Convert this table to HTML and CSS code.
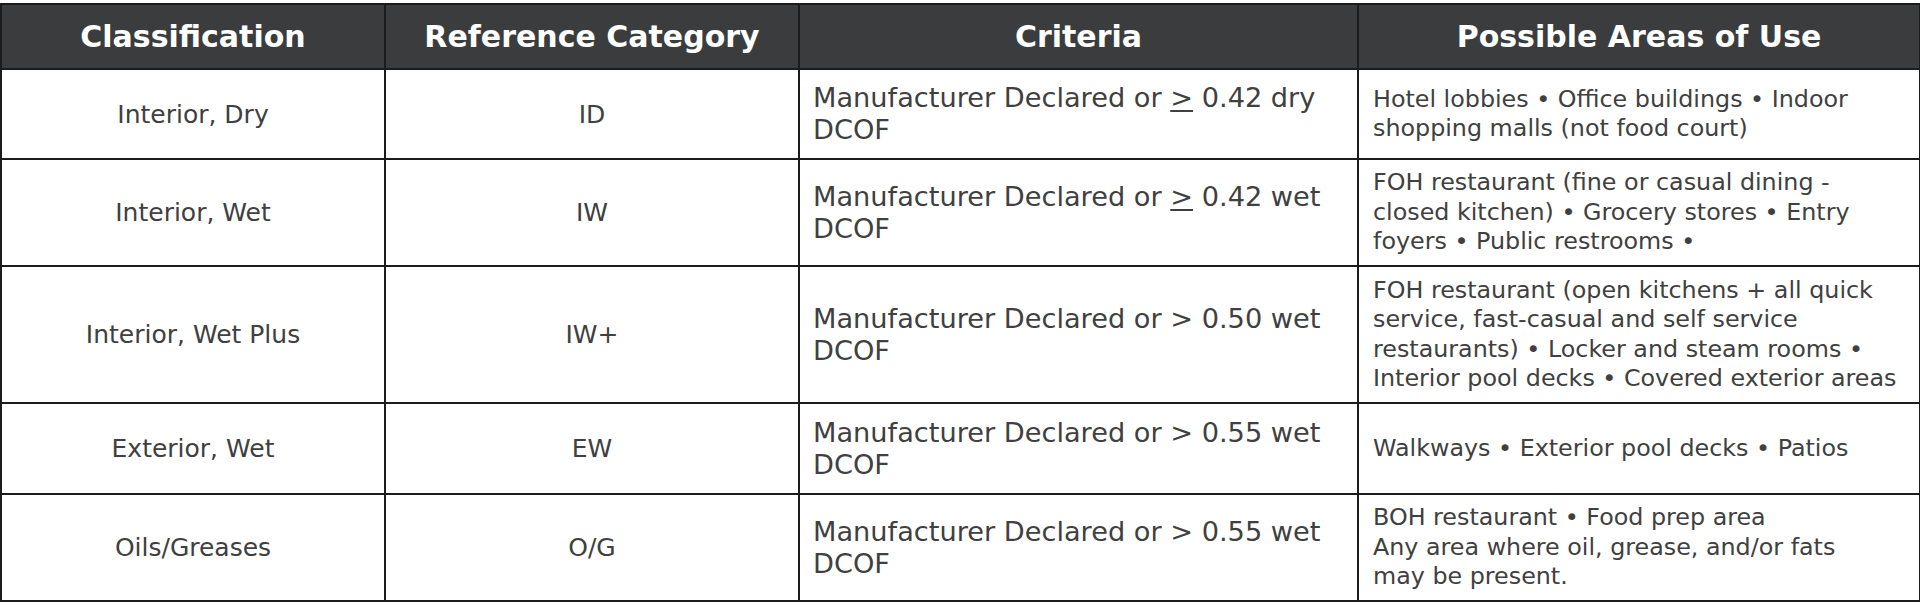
FILE: index.html
```html
<!DOCTYPE html>
<html lang="en">
<head>
<meta charset="utf-8">
<title>Slip Resistance Classification</title>
<link rel="stylesheet" href="styles.css">
</head>
<body>
<table class="spec">
  <colgroup>
    <col class="c1"><col class="c2"><col class="c3"><col class="c4">
  </colgroup>
  <thead>
    <tr class="head">
      <th>Classification</th>
      <th>Reference Category</th>
      <th>Criteria</th>
      <th>Possible Areas of Use</th>
    </tr>
  </thead>
  <tbody>
    <tr class="r1">
      <td class="cls">Interior, Dry</td>
      <td class="cat">ID</td>
      <td class="crit">Manufacturer Declared or <span class="u">&gt;</span> 0.42 dry<br>DCOF</td>
      <td class="area">Hotel lobbies • Office buildings • Indoor<br>shopping malls (not food court)</td>
    </tr>
    <tr class="r2">
      <td class="cls">Interior, Wet</td>
      <td class="cat">IW</td>
      <td class="crit">Manufacturer Declared or <span class="u">&gt;</span> 0.42 wet<br>DCOF</td>
      <td class="area">FOH restaurant (fine or casual dining -<br>closed kitchen) • Grocery stores • Entry<br>foyers • Public restrooms •</td>
    </tr>
    <tr class="r3">
      <td class="cls">Interior, Wet Plus</td>
      <td class="cat">IW+</td>
      <td class="crit">Manufacturer Declared or &gt; 0.50 wet<br>DCOF</td>
      <td class="area">FOH restaurant (open kitchens + all quick<br>service, fast-casual and self service<br>restaurants) • Locker and steam rooms •<br>Interior pool decks • Covered exterior areas</td>
    </tr>
    <tr class="r4">
      <td class="cls">Exterior, Wet</td>
      <td class="cat">EW</td>
      <td class="crit">Manufacturer Declared or &gt; 0.55 wet<br>DCOF</td>
      <td class="area">Walkways • Exterior pool decks • Patios</td>
    </tr>
    <tr class="r5">
      <td class="cls">Oils/Greases</td>
      <td class="cat">O/G</td>
      <td class="crit">Manufacturer Declared or &gt; 0.55 wet<br>DCOF</td>
      <td class="area">BOH restaurant • Food prep area<br>Any area where oil, grease, and/or fats<br>may be present.</td>
    </tr>
  </tbody>
</table>
</body>
</html>
```
FILE: styles.css
```css
html, body {
  margin: 0;
  padding: 0;
  background: #ffffff;
}

body {
  padding-top: 3px;
  font-family: "DejaVu Sans", "Liberation Sans", sans-serif;
  color: #404040;
}

.spec {
  border-collapse: collapse;
  table-layout: fixed;
  width: 1919px;
  margin-left: 0;
}

.c1 { width: 384px; }
.c2 { width: 414px; }
.c3 { width: 559px; }
.c4 { width: 562px; }

.spec th,
.spec td {
  border: 2px solid #1c1c1c;
  padding: 0;
  vertical-align: middle;
}

.spec .head { height: 65px; }
.spec .head th {
  background: #3b3c3e;
  color: #ffffff;
  font-weight: bold;
  font-size: 30px;
  text-align: center;
}

.spec .r1 { height: 90px; }
.spec .r2 { height: 107px; }
.spec .r3 { height: 137px; }
.spec .r4 { height: 91px; }
.spec .r5 { height: 107px; }

.spec .cls,
.spec .cat {
  text-align: center;
  font-size: 25px;
}

.spec .crit {
  font-size: 27.2px;
  line-height: 32px;
  padding-left: 13px;
  text-align: left;
}

.spec .area {
  font-size: 23.8px;
  line-height: 29.5px;
  padding-left: 14px;
  text-align: left;
}

.u {
  text-decoration: underline;
  text-underline-offset: 3px;
}
```
